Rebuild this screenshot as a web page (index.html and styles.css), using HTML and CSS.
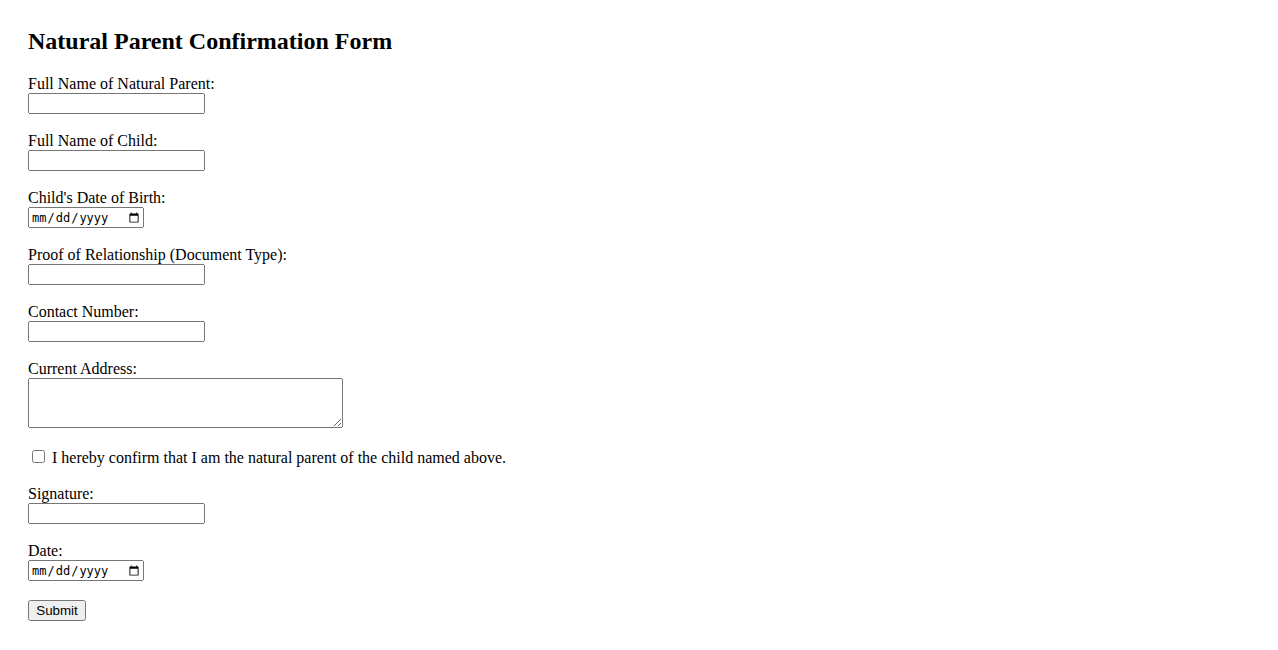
FILE: index.html
```html
<!DOCTYPE html>
<html lang="en">
<head>
    <meta charset="UTF-8">
    <meta name="viewport" content="width=device-width, initial-scale=1.0">
    <title>Natural Parent Confirmation Form</title>
    <link rel="stylesheet" href="styles.css">
</head>
<body>
    <h2>Natural Parent Confirmation Form</h2>
    <form class="parent-form">
        <label for="parentName">Full Name of Natural Parent:</label><br>
        <input type="text" id="parentName" name="parentName" class="text-field"><br><br>

        <label for="childName">Full Name of Child:</label><br>
        <input type="text" id="childName" name="childName" class="text-field"><br><br>

        <label for="childDob">Child's Date of Birth:</label><br>
        <input type="date" id="childDob" name="childDob" class="date-field"><br><br>

        <label for="proof">Proof of Relationship (Document Type):</label><br>
        <input type="text" id="proof" name="proof" class="text-field"><br><br>

        <label for="contact">Contact Number:</label><br>
        <input type="text" id="contact" name="contact" class="text-field"><br><br>

        <label for="address">Current Address:</label><br>
        <textarea id="address" name="address" class="address-field"></textarea><br><br>

        <input type="checkbox" id="confirm" name="confirm">
        <label for="confirm">I hereby confirm that I am the natural parent of the child named above.</label><br><br>

        <label for="signature">Signature:</label><br>
        <input type="text" id="signature" name="signature" class="text-field"><br><br>

        <label for="date">Date:</label><br>
        <input type="date" id="date" name="date" class="date-field"><br><br>

        <button type="submit" class="submit-btn">Submit</button>
    </form>
</body>
</html>
```

FILE: styles.css
```css
body {
    font-family: "Liberation Serif", "Times New Roman", serif;
    font-size: 16px;
    margin: 8px;
    padding: 20px;
    color: #000;
    background-color: #fff;
}

h2 {
    font-size: 24px;
    margin: 0 0 20px 0;
}

.text-field {
    width: 177px;
    height: 21px;
    box-sizing: border-box;
    font-family: "Liberation Sans", Arial, sans-serif;
    font-size: 13.33px;
}

.date-field {
    width: 116px;
    height: 21px;
    box-sizing: border-box;
    font-family: "DejaVu Sans Mono", monospace;
    font-size: 12px;
}

.address-field {
    width: 315px;
    height: 50px;
    margin-bottom: -3px;
    box-sizing: border-box;
    font-family: "Liberation Mono", monospace;
    font-size: 13.33px;
}

.submit-btn {
    width: 58px;
    height: 21px;
    margin-top: 1px;
    padding: 1px 6px;
    font-family: "Liberation Sans", Arial, sans-serif;
    font-size: 13.33px;
}
```
